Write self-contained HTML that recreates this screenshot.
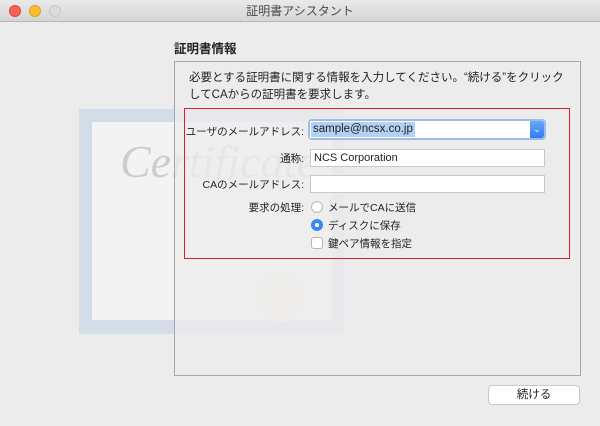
<!DOCTYPE html>
<html><head><meta charset="utf-8"><style>
*{margin:0;padding:0;box-sizing:border-box}
body{width:600px;height:426px;background:#ececec;font-family:"Liberation Sans","Noto Sans CJK JP",sans-serif;color:#222;position:relative;overflow:hidden;font-size:11px}
.tb{position:absolute;left:0;top:0;width:600px;height:22px;background:linear-gradient(#e9e9e9,#d6d6d6);border-bottom:1px solid #b8b8b8;text-align:center;line-height:22px;font-size:12px;color:#4a4a4a}
.dot{position:absolute;top:5px;width:12px;height:12px;border-radius:50%}
.abs{position:absolute}
.lbl{position:absolute;text-align:right;width:140px;font-size:10.5px;color:#222}
.fld{position:absolute;background:#fff;border:1px solid #c8c8c8;font-size:11px;padding-left:3px;line-height:16px}
</style></head><body>
<div class="tb">証明書アシスタント
<div class="dot" style="left:9px;background:#fc5f57;border:1px solid #e0443e"></div>
<div class="dot" style="left:29px;background:#fdbc2e;border:1px solid #dea123"></div>
<div class="dot" style="left:49px;background:#dcdcdc;border:1px solid #c6c6c6"></div>
</div>
<div class="abs" style="left:174px;top:38px;font-weight:bold;font-size:12.5px">証明書情報</div>
<!-- certificate -->
<div class="abs" style="left:79px;top:109px;width:265px;height:225px;background:#d2dde8;"></div>
<div class="abs" style="left:92px;top:122px;width:240px;height:198px;background:#f3f3f3;"></div>
<div class="abs" style="left:120px;top:135px;font-family:'Liberation Serif',serif;font-style:italic;font-size:46px;color:#cdcdcd">Certificate</div>
<div class="abs" style="left:256px;top:272px;width:50px;height:50px;border-radius:50%;background:#f3f1e6"></div>
<!-- panel -->
<div class="abs" style="left:174px;top:61px;width:407px;height:315px;border:1px solid #a8a8a8;background:rgba(236,236,236,0.8)"></div>
<div class="abs" style="left:189px;top:70px;width:385px;font-size:11.5px;line-height:17px">必要とする証明書に関する情報を入力してください。“続ける”をクリックしてCAからの証明書を要求します。</div>
<div class="abs" style="left:184px;top:108px;width:386px;height:151px;border:1.5px solid #d8232a"></div>
<div class="lbl" style="left:164px;top:124px">ユーザのメールアドレス:</div>
<div class="abs" style="left:308px;top:119px;width:238px;height:21px;border-radius:4px;background:#9dbde6"></div>
<div class="abs" style="left:310px;top:121px;width:220px;height:17px;background:#fff;"></div>
<div class="abs" style="left:311px;top:122px;background:#b3d0f5;font-size:11.5px;line-height:15px;padding:0 2px">sample@ncsx.co.jp</div>
<div class="abs" style="left:530px;top:121px;width:14px;height:17px;background:linear-gradient(#6aa8f6,#2f7ef0);border-radius:0 3px 3px 0;color:#fff;font-size:9px;text-align:center;line-height:16px">⌄</div>
<div class="lbl" style="left:164px;top:151px">通称:</div>
<div class="fld" style="left:310px;top:149px;width:235px;height:18px">NCS Corporation</div>
<div class="lbl" style="left:164px;top:177px">CAのメールアドレス:</div>
<div class="fld" style="left:310px;top:175px;width:235px;height:18px"></div>
<div class="lbl" style="left:164px;top:200px">要求の処理:</div>
<div class="abs" style="left:311px;top:201px;width:12px;height:12px;border-radius:50%;background:#fff;border:1px solid #b8b8b8"></div>
<div class="abs" style="left:328px;top:200px;font-size:10.5px">メールでCAに送信</div>
<div class="abs" style="left:311px;top:219px;width:12px;height:12px;border-radius:50%;background:#3a87f5"></div>
<div class="abs" style="left:315px;top:223px;width:4px;height:4px;border-radius:50%;background:#fff"></div>
<div class="abs" style="left:328px;top:218px;font-size:10.5px">ディスクに保存</div>
<div class="abs" style="left:311px;top:237px;width:12px;height:12px;border-radius:3px;background:#fff;border:1px solid #b8b8b8"></div>
<div class="abs" style="left:328px;top:236px;font-size:10.5px">鍵ペア情報を指定</div>
<div class="abs" style="left:488px;top:385px;width:92px;height:20px;background:#fff;border:1px solid #c8c8c8;border-radius:4px;text-align:center;line-height:18px;font-size:11.5px">続ける</div>
</body></html>
